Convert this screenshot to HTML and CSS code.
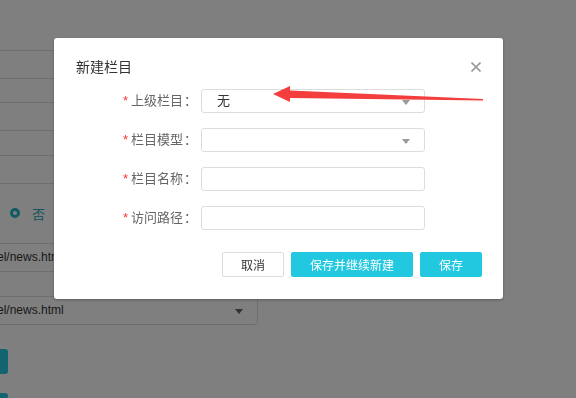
FILE: index.html
```html
<!DOCTYPE html>
<html lang="zh-CN">
<head>
    <meta charset="UTF-8">
    <meta name="viewport" content="width=device-width, initial-scale=1.0">
    <title>新建栏目</title>
    <link rel="stylesheet" href="styles.css">
</head>
<body>
    <!-- page behind the dialog -->
    <div class="page">
        <div class="bg-form">
            <div class="bg-input"></div>
            <div class="bg-input"></div>
            <div class="bg-input"></div>
            <div class="bg-radio"><span class="radio-dot"></span><span>否</span></div>
            <div class="bg-input">el/news.html</div>
            <div class="bg-input bg-select">el/news.html<span class="caret"></span></div>
            <div class="bg-btn"></div>
            <div class="bg-btn last"></div>
        </div>
    </div>

    <div class="mask">
        <div class="modal">
            <div class="modal-head">
                <h3>新建栏目</h3>
                <svg class="close" width="10" height="10" viewBox="0 0 10 10">
                    <path d="M0.5 0.5 L9.5 9.5 M9.5 0.5 L0.5 9.5" stroke="#999" stroke-width="1.6" fill="none"/>
                </svg>
            </div>

            <div class="form">
                <label class="label"><i>*</i>上级栏目<b>：</b></label>
                <div class="field select"><span>无</span><span class="caret"></span></div>

                <label class="label"><i>*</i>栏目模型<b>：</b></label>
                <div class="field select"><span></span><span class="caret"></span></div>

                <label class="label"><i>*</i>栏目名称<b>：</b></label>
                <div class="field"></div>

                <label class="label"><i>*</i>访问路径<b>：</b></label>
                <div class="field"></div>
            </div>

            <div class="actions">
                <button class="btn">取消</button>
                <button class="btn btn-primary">保存并继续新建</button>
                <button class="btn btn-primary">保存</button>
            </div>
        </div>

        <!-- red annotation arrow -->
        <svg class="arrow" width="216" height="20" viewBox="0 0 216 20">
            <polygon points="3,10 20,2 20,6.5 213,15 213,16.5 20,14 20,18" fill="#f43d3d"/>
        </svg>
    </div>
</body>
</html>
```

FILE: styles.css
```css
* { margin: 0; padding: 0; box-sizing: border-box; }
body { font-family: "Liberation Sans", "Noto Sans CJK SC", sans-serif; background: #fff; color: #333; width: 576px; height: 398px; overflow: hidden; }

/* background page */
.page { padding-top: 50px; height: 398px; overflow: hidden; }
.bg-form { margin-left: -12px; display: flex; flex-direction: column; align-items: flex-start; }
.bg-input { width: 420px; height: 29px; border: 1px solid #ddd; border-radius: 3px; padding-left: 8px; font-size: 12px; line-height: 27px; color: #333; margin-bottom: 23px; }
.bg-input:nth-child(2) { margin-bottom: 24px; }
.bg-input:nth-child(3) { margin-bottom: 19px; }
.bg-radio { height: 20px; display: flex; align-items: center; margin: 0 0 20px 22px; font-size: 13px; color: #2aa9b9; }
.radio-dot { width: 10px; height: 10px; border: 3px solid #20b4c8; border-radius: 50%; margin-right: 12px; background: #fff; }
.bg-form .bg-input:nth-child(5) { margin-bottom: 24px; }
.bg-select { width: 270px; display: flex; justify-content: space-between; align-items: center; padding-right: 14px; margin-bottom: 24px; }
.bg-select .caret { border-top-color: #666; }
.bg-btn { width: 20px; height: 25px; background: #22c8e0; border-radius: 3px; margin-bottom: 19px; }
.bg-btn.last { height: 6px; margin-bottom: 0; }

/* dialog */
.mask { position: fixed; top: 0; left: 0; right: 0; bottom: 0; background: rgba(0, 0, 0, 0.5); padding: 38px 0 0 54px; }
.modal { width: 449px; background: #fff; border-radius: 3px; box-shadow: 0 1px 3px rgba(0, 0, 0, 0.3); padding: 20px 21px 22px 22px; }
.modal-head { display: flex; justify-content: space-between; align-items: center; height: 18px; padding-right: 1px; }
.modal-head h3 { font-size: 14px; font-weight: normal; color: #333; line-height: 18px; }
.close { margin-top: -1px; }

.form { display: grid; grid-template-columns: 125px 224px; row-gap: 15px; margin-top: 13px; }
.label { font-size: 13px; color: #666; text-align: right; padding-right: 4px; line-height: 24px; }
.label i { font-style: normal; color: #f33; margin-right: 3px; }
.label b { font-weight: normal; display: inline-block; width: 13px; text-align: center; margin-left: 1px; }
.field { height: 24px; border: 1px solid #ddd; border-radius: 3px; font-size: 13px; line-height: 22px; padding-left: 15px; }
.select { display: flex; justify-content: space-between; align-items: center; padding-right: 14px; }
.caret { width: 0; height: 0; border-left: 4px solid transparent; border-right: 4px solid transparent; border-top: 5px solid #999; margin-top: 2px; }

.actions { display: flex; justify-content: flex-end; gap: 7px; margin-top: 22px; }
.btn { height: 25px; padding: 0 18px; font-family: inherit; font-size: 12px; color: #333; background: #fff; border: 1px solid #ddd; border-radius: 2px; }
.btn-primary { background: #22c7e0; border-color: #22c7e0; color: #fff; }

.arrow { position: absolute; left: 270px; top: 84px; }
```
